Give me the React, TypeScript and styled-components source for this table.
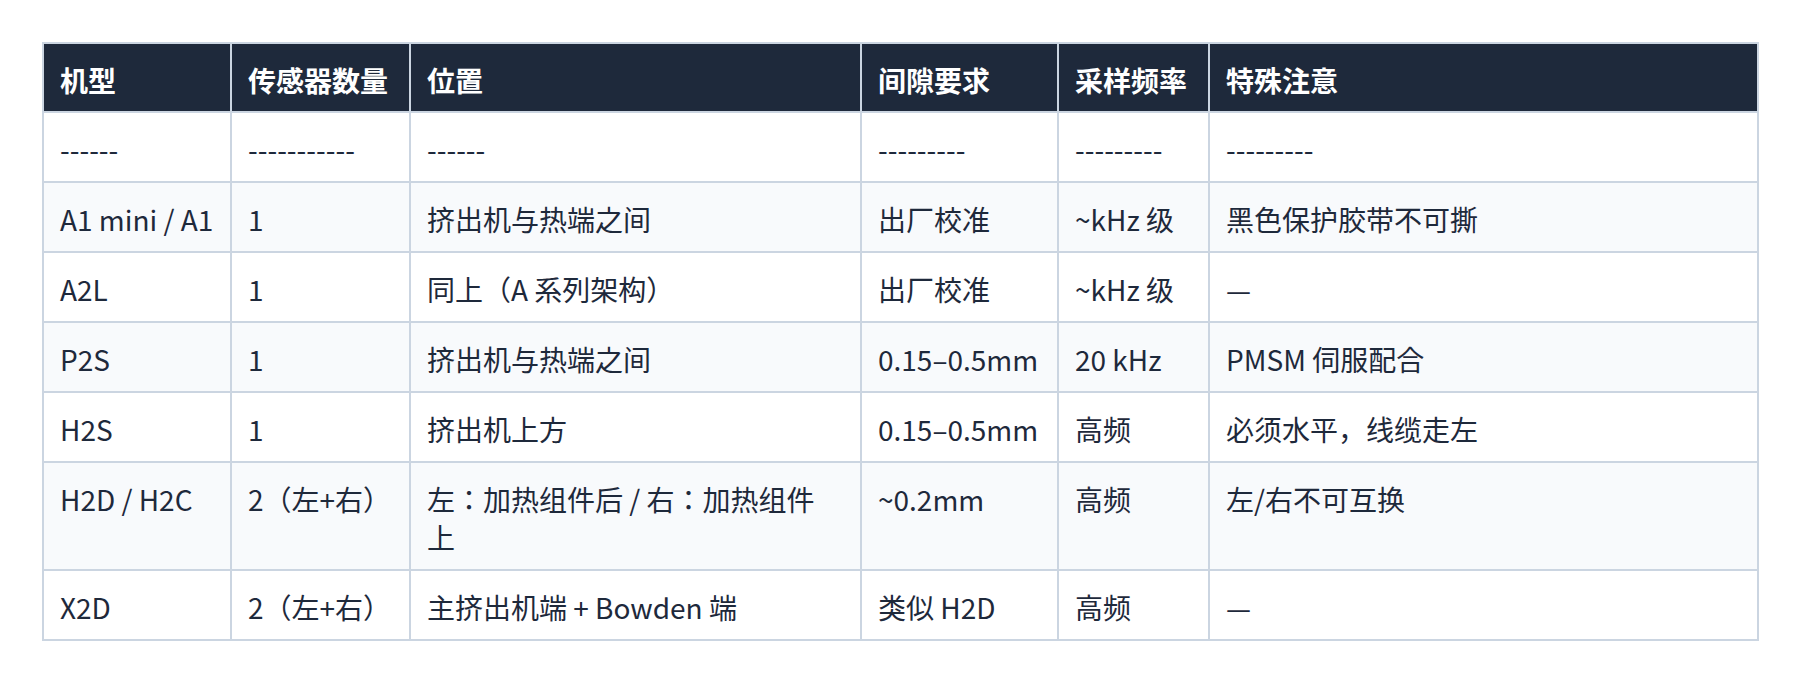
import styled, { createGlobalStyle } from 'styled-components'

const GlobalStyle = createGlobalStyle`
  * {
    box-sizing: border-box;
  }

  body {
    margin: 0;
    background: #ffffff;
    font-family: "Noto Sans CJK JP", "Noto Sans CJK SC", "Noto Sans", sans-serif;
  }
`

const Page = styled.div`
  padding: 42px 41px 40px 42px;
`

const Table = styled.table`
  width: 100%;
  border-collapse: collapse;
  table-layout: fixed;
  border: 2px solid #cbd5e1;
  font-size: 28px;
  line-height: 38px;
  color: #1e293b;
`

const HeadCell = styled.th`
  background-color: #1e293b;
  color: #ffffff;
  font-weight: 700;
  text-align: left;
  padding: 17px 16px 12px;
  border: 2px solid #cbd5e1;
  vertical-align: top;
`

const Row = styled.tr<{ $striped: boolean }>`
  background-color: ${props => (props.$striped ? '#f8fafc' : '#ffffff')};
`

const Cell = styled.td`
  padding: 17px 16px 13px;
  border: 2px solid #cbd5e1;
  vertical-align: top;
  font-weight: 400;
`

const columns = [
  { title: '机型', width: 188 },
  { title: '传感器数量', width: 179 },
  { title: '位置', width: 451 },
  { title: '间隙要求', width: 197 },
  { title: '采样频率', width: 151 },
  { title: '特殊注意', width: 549 },
]

const rows: React.ReactNode[][] = [
  ['------', '-----------', '------', '---------', '---------', '---------'],
  ['A1 mini / A1', '1', '挤出机与热端之间', '出厂校准', '~kHz 级', '黑色保护胶带不可撕'],
  ['A2L', '1', '同上（A 系列架构）', '出厂校准', '~kHz 级', '—'],
  ['P2S', '1', '挤出机与热端之间', '0.15–0.5mm', '20 kHz', 'PMSM 伺服配合'],
  ['H2S', '1', '挤出机上方', '0.15–0.5mm', '高频', '必须水平，线缆走左'],
  [
    'H2D / H2C',
    '2（左+右）',
    <>左：加热组件后 / 右：加热组件<br />上</>,
    '~0.2mm',
    '高频',
    '左/右不可互换',
  ],
  ['X2D', '2（左+右）', '主挤出机端 + Bowden 端', '类似 H2D', '高频', '—'],
]

const App = () => {
  return (
    <Page>
      <GlobalStyle />
      <Table>
        <colgroup>
          {columns.map(col => (
            <col key={col.title} style={{ width: `${col.width}px` }} />
          ))}
        </colgroup>
        <thead>
          <tr>
            {columns.map(col => (
              <HeadCell key={col.title}>{col.title}</HeadCell>
            ))}
          </tr>
        </thead>
        <tbody>
          {rows.map((row, idx) => (
            <Row key={idx} $striped={idx % 2 === 1}>
              {row.map((value, i) => (
                <Cell key={i}>{value}</Cell>
              ))}
            </Row>
          ))}
        </tbody>
      </Table>
    </Page>
  )
}

export default App
